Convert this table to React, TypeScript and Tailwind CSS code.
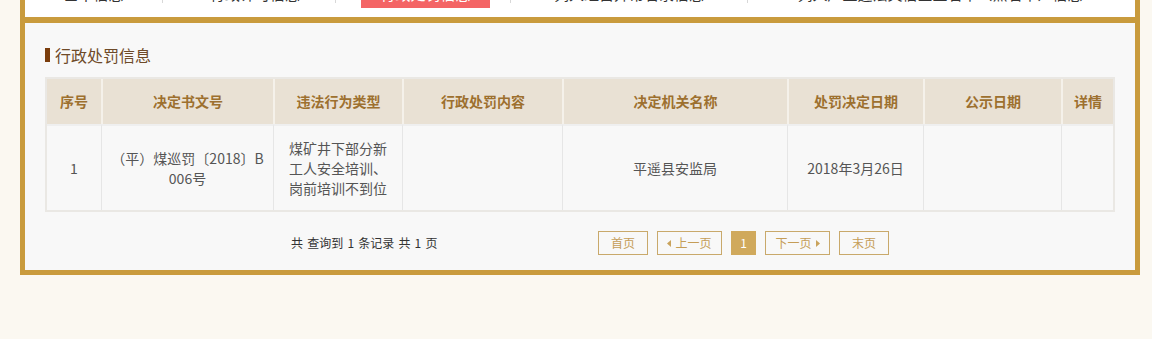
import React from 'react';

const gold = 'bg-[#c99b3d]';

const columns = [
  { label: '序号', w: 'w-[54px]' },
  { label: '决定书文号', w: 'w-[172px]' },
  { label: '违法行为类型', w: 'w-[129px]' },
  { label: '行政处罚内容', w: 'w-[160px]' },
  { label: '决定机关名称', w: 'w-[225px]' },
  { label: '处罚决定日期', w: 'w-[136px]' },
  { label: '公示日期', w: 'w-[138px]' },
  { label: '详情', w: 'w-[52px]' },
];

const Tri = ({ dir }: { dir: 'left' | 'right' }) => (
  <svg width="4" height="7" viewBox="0 0 4 7" className="inline-block">
    {dir === 'left' ? <path d="M4 0 L0 3.5 L4 7 Z" fill="#c9a35c" /> : <path d="M0 0 L4 3.5 L0 7 Z" fill="#c9a35c" />}
  </svg>
);

// tab strip is scrolled mostly out of view; only the bottom edge shows
const TabBar = () => (
  <div className="h-[17px] bg-white overflow-hidden">
    <div className="flex -mt-[17px] h-[25px] text-[15px] text-[#333] leading-[22px]">
      <div className="w-[137px] text-center">基本信息</div>
      <div className="w-px h-[20px] bg-[#d8d8d8]" />
      <div className="w-[172px] text-center pl-[12px]">行政许可信息</div>
      <div className="w-px h-[20px] bg-[#d8d8d8]" />
      <div className="w-[174px] pl-[25px]">
        <div className="w-[129px] h-[25px] bg-[#f46565] text-white text-center">行政处罚信息</div>
      </div>
      <div className="w-px h-[20px] bg-[#d8d8d8]" />
      <div className="w-[236px] text-center">列入经营异常名录信息</div>
      <div className="w-px h-[20px] bg-[#d8d8d8]" />
      <div className="w-[384px] text-center whitespace-nowrap">列入严重违法失信企业名单（黑名单）信息</div>
    </div>
  </div>
);

export default function App() {
  return (
    <div className="min-h-screen w-full bg-[#fbf8f1] font-['Noto_Sans_CJK_SC','Liberation_Sans',sans-serif]">
      <div className="ml-[20px] w-[1120px] border-x-[5px] border-b-[5px] border-[#c99b3d]">
        <TabBar />
        <div className={`h-[6px] ${gold}`} />
        <div className="bg-[#f8f8f8] px-[20px] pt-[22px] pb-[15px]">
          {/* section title */}
          <div className="flex items-center h-[20px]">
            <span className="w-[5px] h-[14px] bg-[#7a3d0c]" />
            <span className="ml-[5px] text-[16px] leading-[20px] text-[#6e4a28]">行政处罚信息</span>
          </div>

          <table className="mt-[12px] w-[1070px] table-fixed border-separate border-spacing-0 border-2 border-[#eae8e4]">
            <colgroup>
              {columns.map((c) => (
                <col key={c.label} className={c.w} />
              ))}
            </colgroup>
            <thead>
              <tr>
                {columns.map((c, i) => (
                  <th
                    key={c.label}
                    className={`h-[45px] bg-[#e9e1d4] text-[14px] font-bold text-[#9d702f] text-center ${
                      i === 0 ? '' : 'border-l-2 border-[#f5f1ea]'
                    }`}
                  >
                    {c.label}
                  </th>
                ))}
              </tr>
            </thead>
            <tbody>
              <tr className="text-[14px] leading-[20px] text-[#555] text-center">
                <td className="h-[86px] border-t-2 border-[#efefef]">1</td>
                <td className="border-t-2 border-l border-[#e6e6e6] border-t-[#efefef] px-[8px]">
                  （平）煤巡罚〔2018〕B
                  <br />
                  006号
                </td>
                <td className="border-t-2 border-l border-[#e6e6e6] border-t-[#efefef]">
                  煤矿井下部分新
                  <br />
                  工人安全培训、
                  <br />
                  岗前培训不到位
                </td>
                <td className="border-t-2 border-l border-[#e6e6e6] border-t-[#efefef]" />
                <td className="border-t-2 border-l border-[#e6e6e6] border-t-[#efefef]">平遥县安监局</td>
                <td className="border-t-2 border-l border-[#e6e6e6] border-t-[#efefef]">2018年3月26日</td>
                <td className="border-t-2 border-l border-[#e6e6e6] border-t-[#efefef]" />
                <td className="border-t-2 border-l border-[#e6e6e6] border-t-[#efefef]" />
              </tr>
            </tbody>
          </table>

          {/* pager */}
          <div className="mt-[19px] flex items-center h-[24px] text-[12px]">
            <span className="ml-[246px] w-[307px] text-[#333] whitespace-pre [word-spacing:1.5px]">共 查询到 1 条记录 共 1 页</span>
            <div className="flex gap-[9px] text-[#c59d57]">
              <span className="w-[50px] h-[24px] border border-[#c9a96b] flex items-center justify-center">首页</span>
              <span className="w-[65px] h-[24px] border border-[#c9a96b] flex items-center justify-center gap-[4px]">
                <Tri dir="left" />
                上一页
              </span>
              <span className="w-[25px] h-[24px] bg-[#d0a95c] text-white flex items-center justify-center">1</span>
              <span className="w-[65px] h-[24px] border border-[#c9a96b] flex items-center justify-center gap-[4px]">
                下一页
                <Tri dir="right" />
              </span>
              <span className="w-[50px] h-[24px] border border-[#c9a96b] flex items-center justify-center">末页</span>
            </div>
          </div>
        </div>
      </div>
    </div>
  );
}
